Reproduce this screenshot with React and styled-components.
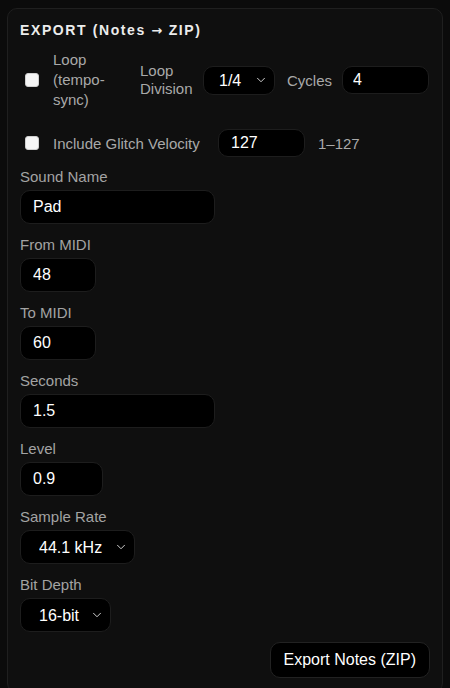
import React, {useState} from 'react'
import styled, {createGlobalStyle} from 'styled-components'
import {ChevronDown} from 'lucide-react'

const GlobalStyle = createGlobalStyle`
body {
	margin:0;
	background:#0b0b0b;
	font-family:"Liberation Sans", Arial, sans-serif;
	color:#eee;
}
`

const Page = styled.div`
padding:8px 7px 0 7px;
height:688px;
overflow:hidden;
box-sizing:border-box;
`

const Card = styled.div`
background:#0f0f0f;
border:1px solid #1f1f1f;
border-radius:10px;
padding:12px 12px 14px 12px;
display:flex;
flex-direction:column;
gap:12px;
`

const Title = styled.div`
font-size:14px;
font-weight:700;
letter-spacing:1.6px;
line-height:18px;
color:#ececec;
margin-bottom:-2px;
`

const Arrow = styled.span`
font-family:"DejaVu Sans", sans-serif;
font-size:13px;
letter-spacing:1px;
`

const Row = styled.div`
display:flex;
align-items:center;
gap:${p => p.gap || 12}px;
margin-bottom:${p => p.extra || 0}px;
`

const CheckLabel = styled.label`
display:flex;
align-items:center;
gap:14px;
padding-left:5px;
width:${p => p.width ? p.width + 'px' : 'auto'};
flex-shrink:0;
box-sizing:border-box;
`

const Check = styled.input.attrs({type:'checkbox'})`
appearance:none;
margin:0;
width:14px;
height:14px;
border-radius:3px;
background:#f5f5f5;
border:1px solid #cfcfcf;
flex-shrink:0;
`

const Text = styled.span`
font-size:15px;
line-height:${p => p.lh || 19}px;
color:#a9a9a9;
flex-shrink:0;
width:${p => p.width ? p.width + 'px' : 'auto'};
`

const Field = styled.div`
display:flex;
flex-direction:column;
gap:5px;
`

const Label = styled.div`
font-size:15px;
line-height:17px;
color:#a3a3a3;
`

const Input = styled.input`
box-sizing:border-box;
width:${p => p.width}px;
height:${p => p.h || 34}px;
background:#000;
border:1px solid #1d1d1d;
border-radius:10px;
color:#fff;
font-family:inherit;
font-size:16px;
padding:0 ${p => p.pad || 12}px;
outline:none;
flex-shrink:0;
`

const SelectWrap = styled.div`
position:relative;
width:${p => p.width}px;
flex-shrink:0;
`

const Select = styled.select`
appearance:none;
box-sizing:border-box;
width:100%;
height:${p => p.h || 35}px;
background:#000;
border:1px solid #1d1d1d;
border-radius:10px;
color:#fff;
font-family:inherit;
font-size:16px;
padding:0 26px 0 ${p => p.pad || 18}px;
outline:none;
`

const Chevron = styled(ChevronDown)`
position:absolute;
right:7px;
top:50%;
transform:translateY(-50%);
pointer-events:none;
color:#ddd;
`

const Button = styled.button`
align-self:flex-end;
height:36px;
padding:0 13px;
background:#000;
border:1px solid #222;
border-radius:10px;
color:#fff;
font-family:inherit;
font-size:16px;
margin-top:-2px;
`

function Dropdown ({width, h, pad, value, options}) {
	const [val, setVal] = useState(value)
	return (
		<SelectWrap width={width}>
			<Select h={h} pad={pad} value={val} onChange={e => setVal(e.target.value)}>
				{options.map(o => <option key={o} value={o}>{o}</option>)}
			</Select>
			<Chevron size={14} strokeWidth={1.6}/>
		</SelectWrap>
	)
}

export default function App () {
	return (
		<Page>
			<GlobalStyle/>
			<Card>
				<Title>EXPORT (Notes <Arrow>→</Arrow> ZIP)</Title>
				<Row extra={7} gap={12}>
					<CheckLabel width={108}>
						<Check/>
						<Text width={56} lh={20}>Loop (tempo-sync)</Text>
					</CheckLabel>
					<Text width={51} lh={18}>Loop Division</Text>
					<Dropdown width={72} h={29} pad={15} value="1/4" options={['1/1', '1/2', '1/4', '1/8', '1/16']}/>
					<Text width={43}>Cycles</Text>
					<Input width={87} h={28} pad={10} defaultValue="4"/>
				</Row>
				<Row gap={13} extra={-1}>
					<CheckLabel>
						<Check/>
						<Text width={152}>Include Glitch Velocity</Text>
					</CheckLabel>
					<Input width={87} h={28} defaultValue="127"/>
					<Text>1–127</Text>
				</Row>
				<Field>
					<Label>Sound Name</Label>
					<Input width={195} defaultValue="Pad"/>
				</Field>
				<Field>
					<Label>From MIDI</Label>
					<Input width={76} defaultValue="48"/>
				</Field>
				<Field>
					<Label>To MIDI</Label>
					<Input width={76} defaultValue="60"/>
				</Field>
				<Field>
					<Label>Seconds</Label>
					<Input width={195} defaultValue="1.5"/>
				</Field>
				<Field>
					<Label>Level</Label>
					<Input width={83} defaultValue="0.9"/>
				</Field>
				<Field>
					<Label>Sample Rate</Label>
					<Dropdown width={115} h={34} value="44.1 kHz" options={['44.1 kHz', '48 kHz', '96 kHz']}/>
				</Field>
				<Field>
					<Label>Bit Depth</Label>
					<Dropdown width={91} h={34} value="16-bit" options={['16-bit', '24-bit', '32-bit']}/>
				</Field>
				<Button>Export Notes (ZIP)</Button>
			</Card>
		</Page>
	)
}
